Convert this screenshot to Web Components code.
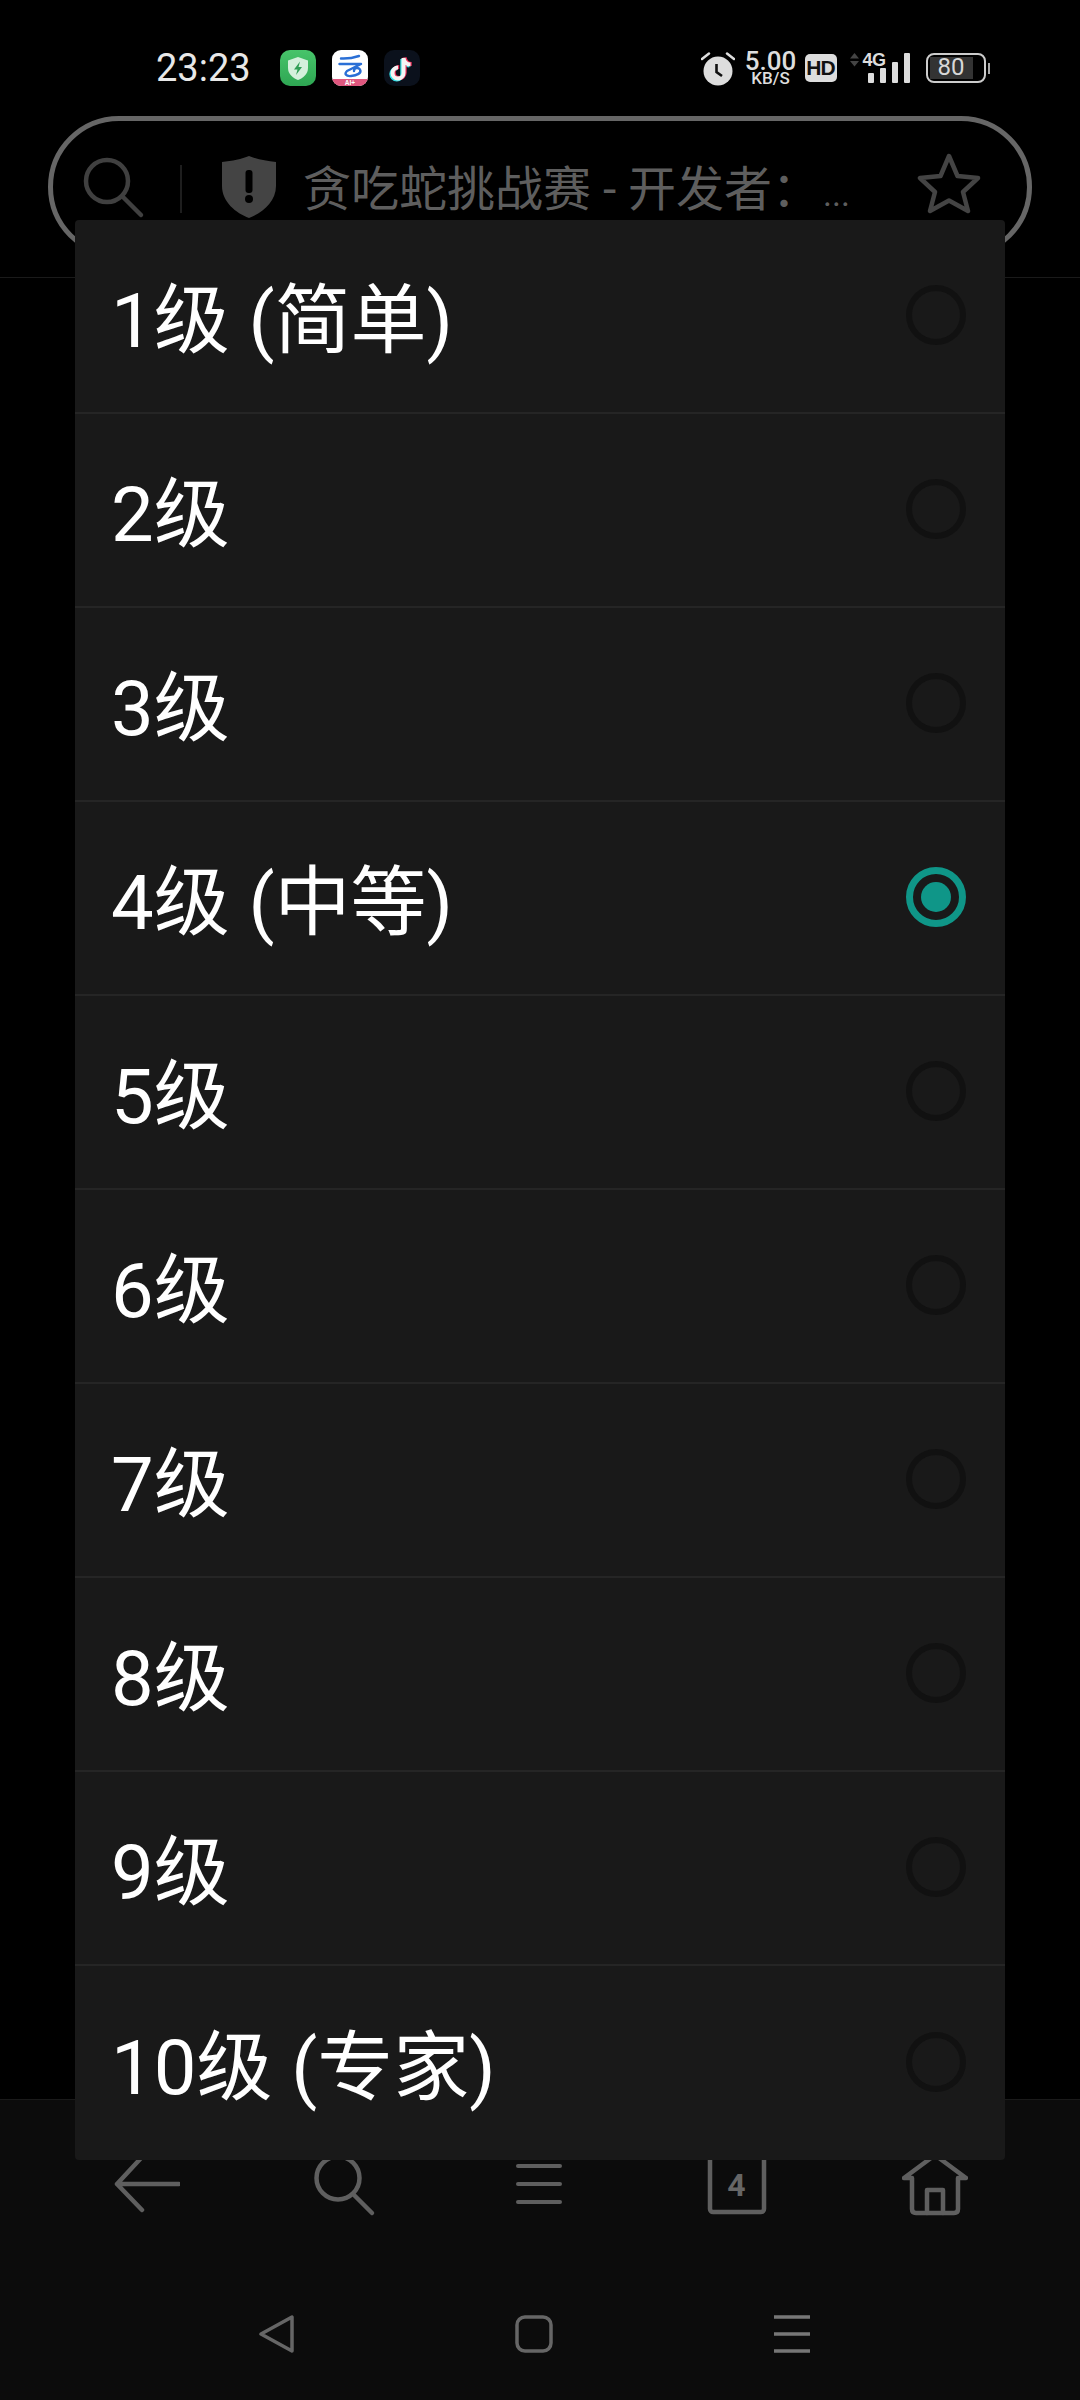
<!DOCTYPE html>
<html lang="zh">
<head>
<meta charset="utf-8">
<title>难度</title>
<style>
    html, body {
        margin: 0;
        background: #000;
    }
    body {
        font-family: Roboto, "Noto Sans CJK SC", sans-serif;
    }
</style>
</head>
<body>
<game-page></game-page>

<script>
function defineElement (name, html) {
    const template = document.createElement ("template");
    template.innerHTML = html;
    customElements.define (name, class extends HTMLElement {
        constructor () {
            super ();
            this.attachShadow ({mode: "open"});
            this.shadowRoot.appendChild (template.content.cloneNode (true));
        }
    });
}

defineElement ("status-bar", `
<style>
    :host {
        display: flex;
        align-items: center;
        height: 116px;
        padding: 20px 90px 0 156px;
        box-sizing: border-box;
        color: #e8e8e8;
    }
    .time {
        font: 400 38px Roboto, sans-serif;
        width: 124px;
    }
    .apps {
        display: flex;
        gap: 16px;
    }
    .apps svg {
        display: block;
        width: 36px;
        height: 36px;
    }
    .system {
        margin-left: auto;
        display: flex;
        align-items: center;
    }
    .alarm {
        width: 34px;
        height: 36px;
        margin-right: 10px;
    }
    .speed {
        display: flex;
        flex-direction: column;
        align-items: center;
        width: 52px;
        margin-right: 8px;
        font-family: Roboto, sans-serif;
        color: #ddd;
    }
    .speed b {
        font-size: 26px;
        line-height: 20px;
        font-weight: 500;
    }
    .speed small {
        font-size: 17px;
        line-height: 14px;
        font-weight: 500;
    }
    .hd {
        width: 32px;
        height: 28px;
        border-radius: 5px;
        background: #ddd;
        color: #111;
        font: 700 21px/28px "Liberation Sans", sans-serif;
        letter-spacing: -1px;
        text-align: center;
        margin-right: 12px;
    }
    .signal {
        position: relative;
        width: 62px;
        height: 30px;
        margin-right: 15px;
    }
    .signal svg {
        display: block;
        width: 62px;
        height: 30px;
    }
    .signal span {
        position: absolute;
        left: 14px;
        top: -2px;
        font: 700 18px/18px "Liberation Sans", sans-serif;
        letter-spacing: -0.6px;
        color: #ddd;
    }
    .battery {
        display: flex;
        align-items: center;
    }
    .cell {
        width: 60px;
        height: 30px;
        box-sizing: border-box;
        border: 2.5px solid #ccc;
        border-radius: 8px;
        padding: 2px;
    }
    .level {
        width: 43px;
        height: 100%;
        background: #333;
        color: #d8d8d8;
        font: 400 24px/21px Roboto, sans-serif;
        text-align: center;
    }
    .nub {
        width: 2.5px;
        height: 11px;
        margin-left: 2px;
        background: #aaa;
    }
    .ai {
        font: 700 6.5px "Liberation Sans", sans-serif;
        fill: #fff;
    }
</style>
<span class="time">23:23</span>
<div class="apps">
    <svg viewBox="0 0 36 36">
        <defs><linearGradient id="g" x1="0" y1="0" x2="0" y2="1"><stop offset="0" stop-color="#47c46a"/><stop offset="1" stop-color="#2ea653"/></linearGradient></defs>
        <rect width="36" height="36" rx="10" fill="url(#g)"/>
        <path d="M18 7 L28 10.500 V18 C28 24 23 28 18 30 C13 28 8 24 8 18 V10.500 Z" fill="#d4f0dc"/>
        <path d="M20 11.500 L14 19.500 H17.500 L16 25 L22 17 H18.500 Z" fill="#2f9e55"/>
    </svg>
    <svg viewBox="0 0 36 36">
        <clipPath id="c"><rect width="36" height="36" rx="9"/></clipPath>
        <g clip-path="url(#c)">
            <rect width="36" height="36" fill="#fff"/>
            <rect y="29" width="36" height="7" fill="#e0577f"/>
            <path d="M9 8.500 Q18 9 27 6 M7.500 14 H29 L15 21 C12 24 14 26.500 19 26 C25 25.500 30 23 28 19.500 C26 17 22 18 22 21" fill="none" stroke="#2a6fd6" stroke-width="2.400" stroke-linecap="round" stroke-linejoin="round"/>
            <text class="ai" x="18" y="35" text-anchor="middle">AI+</text>
        </g>
    </svg>
    <svg viewBox="0 0 36 36">
        <rect width="36" height="36" rx="10" fill="#0b111c"/>
        <g fill="none" stroke-width="4">
            <path d="M19.500 8 V23 A5.500 5.500 0 1 1 14 17.500 M19.500 8 C20 12 23 14.500 26.500 14.500" stroke="#35e0e6" transform="translate(-1.200 1)"/>
            <path d="M19.500 8 V23 A5.500 5.500 0 1 1 14 17.500 M19.500 8 C20 12 23 14.500 26.500 14.500" stroke="#f0305a" transform="translate(1.200 -.4)"/>
            <path d="M19.500 8 V23 A5.500 5.500 0 1 1 14 17.500 M19.500 8 C20 12 23 14.500 26.500 14.500" stroke="#f4f4f4"/>
        </g>
    </svg>
</div>
<div class="system">
    <svg class="alarm" viewBox="0 0 34 36">
        <circle cx="17" cy="21" r="14.500" fill="#ddd"/>
        <path d="M1 9 L8 3.500 M33 9 L26 3.500" stroke="#ddd" stroke-width="2.500" stroke-linecap="round"/>
        <path d="M15.500 14 V22 L21 26" fill="none" stroke="#111" stroke-width="2.600"/>
    </svg>
    <div class="speed"><b>5.00</b><small>KB/S</small></div>
    <div class="hd">HD</div>
    <div class="signal">
        <svg viewBox="0 0 62 30">
            <path d="M1 5.500 L5.500 0 L10 5.500 Z M1 8 L5.500 13.500 L10 8 Z" fill="#444"/>
            <g fill="#ddd">
                <rect x="19" y="20" width="6" height="10" rx="1"/>
                <rect x="31" y="15" width="6" height="15" rx="1"/>
                <rect x="43" y="9" width="6" height="21" rx="1"/>
                <rect x="55" y="0" width="6" height="30" rx="1"/>
            </g>
        </svg>
        <span>4G</span>
    </div>
    <div class="battery">
        <div class="cell"><div class="level">80</div></div>
        <div class="nub"></div>
    </div>
</div>
`);

defineElement ("url-bar", `
<style>
    :host {
        display: flex;
        align-items: center;
        height: 142px;
        margin: 0 48px;
        padding: 0 46px 0 30px;
        box-sizing: border-box;
        border: 5px solid #666;
        border-radius: 71px;
        color: #5e5e5e;
    }
    svg {
        display: block;
        flex: none;
    }
    .search {
        width: 66px;
        height: 66px;
        margin-top: 6px;
    }
    .sep {
        width: 2px;
        height: 48px;
        margin: 4px 40px 0 31px;
        background: #1e1e1e;
    }
    .shield {
        width: 54px;
        height: 62px;
        margin-right: 27px;
        margin-top: 0;
    }
    .title {
        flex: 1;
        font-size: 48px;
        line-height: 60px;
        white-space: nowrap;
        overflow: hidden;
        margin-top: 10px;
    }
    .title span {
        font-size: 34px;
        margin-left: 3px;
    }
    .star {
        width: 64px;
        height: 62px;
        margin-top: -6px;
    }
</style>
<svg class="search" viewBox="0 0 66 66" fill="none" stroke="#404040" stroke-width="4.500" stroke-linecap="round">
    <circle cx="24" cy="24" r="21"/>
    <path d="M40 40 L58 58"/>
</svg>
<span class="sep"></span>
<svg class="shield" viewBox="0 0 54 62">
    <path d="M27 0 C34 3 44 5 54 6 V30 C54 46 40 57 27 62 C14 57 0 46 0 30 V6 C10 5 20 3 27 0 Z" fill="#444"/>
    <rect x="23.500" y="14" width="7" height="23" rx="3" fill="#000"/>
    <circle cx="27" cy="43" r="4" fill="#000"/>
</svg>
<div class="title">贪吃蛇挑战赛 - 开发者：<span>...</span></div>
<svg class="star" viewBox="0 0 64 62" fill="none" stroke="#444" stroke-width="4.500" stroke-linejoin="round">
    <path d="M32 3 L40.500 23 L61 25 L46 39 L51 58 L32 47.500 L13 58 L18 39 L3 25 L23.500 23 Z"/>
</svg>
`);

defineElement ("browser-header", `
<style>
    :host {
        display: block;
        height: 278px;
        box-sizing: border-box;
        border-bottom: 1px solid #1a1a1a;
    }
</style>
<status-bar></status-bar>
<url-bar></url-bar>
`);

defineElement ("level-option", `
<style>
    :host {
        display: flex;
        align-items: center;
        justify-content: space-between;
        height: 194px;
        box-sizing: border-box;
        padding: 10px 39px 0 36px;
        border-bottom: 2px solid #252525;
        color: #fff;
        font-family: Roboto, "Noto Sans CJK SC", sans-serif;
        font-size: 76px;
        line-height: 100px;
    }
    :host(:last-child) {
        border-bottom: 0;
    }
    .radio {
        width: 60px;
        height: 60px;
        margin-top: -12px;
        box-sizing: border-box;
        border: 6px solid #111;
        border-radius: 50%;
        display: flex;
        align-items: center;
        justify-content: center;
    }
    :host([checked]) .radio {
        border: 7px solid #0f9688;
    }
    :host([checked]) .radio::after {
        content: "";
        width: 30px;
        height: 30px;
        border-radius: 50%;
        background: #0f9688;
    }
</style>
<slot></slot>
<span class="radio"></span>
`);

defineElement ("level-dialog", `
<style>
    :host {
        position: absolute;
        left: 75px;
        top: 220px;
        width: 930px;
        height: 1940px;
        display: block;
        overflow: hidden;
        border-radius: 4px;
        background: #191919;
    }
</style>
<slot></slot>
`);

defineElement ("bottom-toolbar", `
<style>
    :host {
        display: grid;
        grid-template-columns: repeat(5, 197px);
        justify-items: center;
        height: 190px;
        box-sizing: border-box;
        padding: 51px 0 0 47px;
        background: #0c0c0c;
    }
    svg {
        display: block;
        width: 66px;
        height: 66px;
    }
    .back {
        margin-left: 2px;
    }
    .home {
        margin-left: 3px;
    }
    .tabs {
        position: relative;
        width: 66px;
        height: 66px;
    }
    .tabs span {
        position: absolute;
        inset: 18px 0 0 0;
        text-align: center;
        font: 700 32px/32px Roboto, sans-serif;
        color: #666;
    }
    .menu {
        position: relative;
        margin-right: 2px;
    }
    .dot {
        position: absolute;
        left: 53px;
        top: -6px;
        width: 11px;
        height: 11px;
        border-radius: 50%;
        background: #7a2c10;
    }
</style>
<svg class="back" viewBox="0 0 66 66" fill="none" stroke="#5f5f5f" stroke-width="4.500" stroke-linecap="round" stroke-linejoin="round">
    <path d="M65 33 H3 M28 6 L3 33 L28 59"/>
</svg>
<svg viewBox="0 0 66 66" fill="none" stroke="#5f5f5f" stroke-width="4.500" stroke-linecap="round">
    <circle cx="28" cy="27" r="21.500"/>
    <path d="M44 44 L62 62"/>
</svg>
<div class="menu">
    <span class="dot"></span>
    <svg viewBox="0 0 66 66" fill="none" stroke="#5f5f5f" stroke-width="4" stroke-linecap="round">
        <path d="M12 15 H54 M12 33 H54 M12 51 H54"/>
    </svg>
</div>
<div class="tabs">
    <svg viewBox="0 0 66 66" fill="none" stroke="#5f5f5f" stroke-width="4.500" stroke-linejoin="round">
        <rect x="6" y="-8" width="54" height="69" rx="3"/>
    </svg>
    <span>4</span>
</div>
<svg class="home" viewBox="0 0 66 66" fill="none" stroke="#5f5f5f" stroke-width="4.500" stroke-linecap="round" stroke-linejoin="round">
    <path d="M2 27 L33 4 L64 27 H56 V58 Q56 62 52 62 H14 Q10 62 10 58 V27 Z"/>
    <path d="M25 62 V39 H41 V62"/>
</svg>
`);

defineElement ("system-nav", `
<style>
    :host {
        display: flex;
        align-items: center;
        height: 110px;
        padding: 0 0 22px 258px;
        box-sizing: border-box;
        background: #0c0c0c;
    }
    svg {
        display: block;
        height: 38px;
    }
</style>
<svg viewBox="0 0 38 38" style="width:38px;margin-right:219px" fill="none" stroke="#666" stroke-width="3.500" stroke-linejoin="round">
    <path d="M3 19 L34 2 V36 Z"/>
</svg>
<svg viewBox="0 0 38 38" style="width:38px;margin-right:220px" fill="none" stroke="#666" stroke-width="3.500">
    <rect x="2" y="2" width="34" height="34" rx="8"/>
</svg>
<svg viewBox="0 0 38 38" style="width:38px" fill="none" stroke="#777" stroke-width="3.500">
    <path d="M1 2 H37 M1 19 H37 M1 36 H37"/>
</svg>
`);

defineElement ("game-page", `
<style>
    :host {
        display: flex;
        flex-direction: column;
        position: relative;
        height: 2400px;
        overflow: hidden;
    }
    .content {
        flex: 1;
        border-bottom: 1px solid #1a1a1a;
        background: #000;
    }
</style>
<browser-header></browser-header>
<div class="content"></div>
<bottom-toolbar></bottom-toolbar>
<system-nav></system-nav>
<level-dialog>
    <level-option>1级 (简单)</level-option>
    <level-option>2级</level-option>
    <level-option>3级</level-option>
    <level-option checked>4级 (中等)</level-option>
    <level-option>5级</level-option>
    <level-option>6级</level-option>
    <level-option>7级</level-option>
    <level-option>8级</level-option>
    <level-option>9级</level-option>
    <level-option>10级 (专家)</level-option>
</level-dialog>
`);
</script>
</body>
</html>
